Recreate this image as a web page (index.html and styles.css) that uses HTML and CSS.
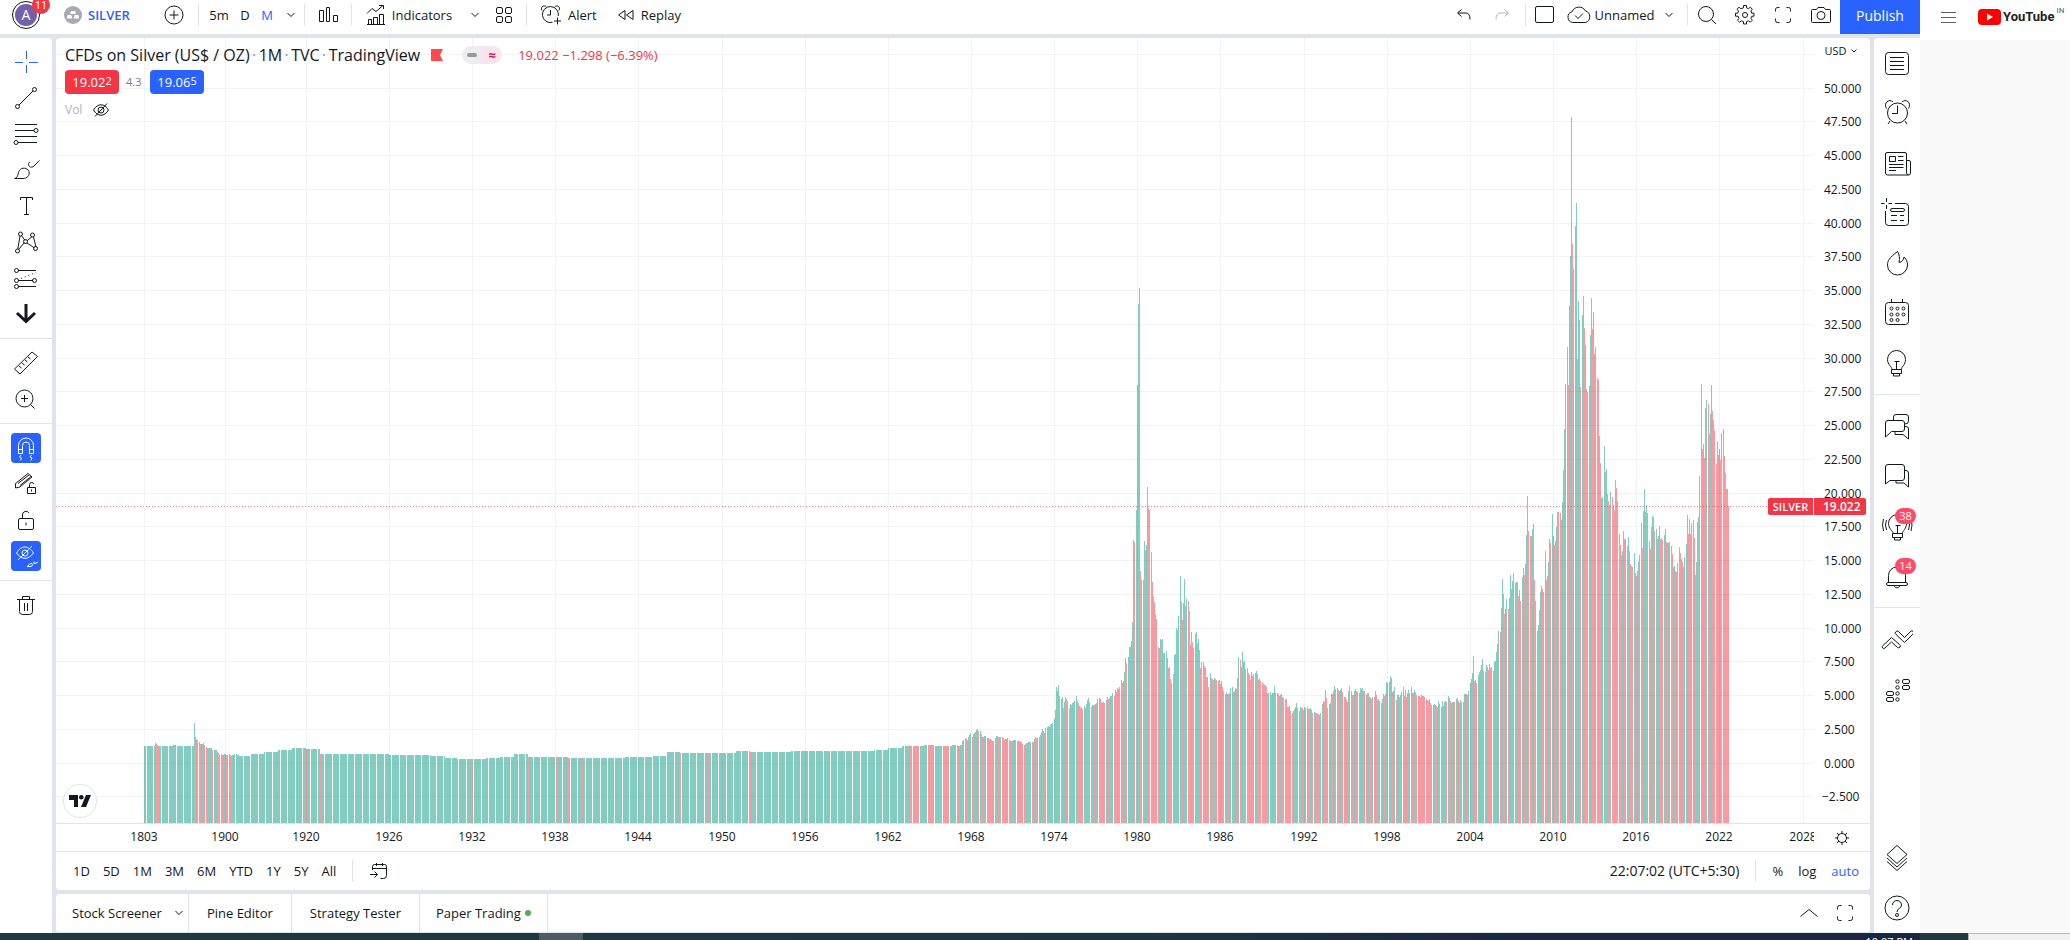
FILE: index.html
```html
<!DOCTYPE html>
<html lang="en">
<head>
<meta charset="utf-8">
<title>SILVER 19.022 − TradingView</title>
<link rel="stylesheet" href="styles.css">
</head>
<body>
<div class="desktop">
<div class="app">
  <header class="topbar">
    <button class="avatar" aria-label="Profile"><span class="avatar-ring"><span class="avatar-face">A</span></span><span class="avatar-badge">11</span></button>
    <button class="symbol"><svg width="18" height="18" viewBox="0 0 18 18"><circle cx="9" cy="9" r="9" fill="#a9a9b2"/><path d="M7 5h4l1 3H6zM3.600 9h3.800l1 3.500H2.800zM10.600 9h3.800l.8 3.500H9.600z" fill="#fff"/></svg><b>SILVER</b></button>
    <button class="tool w32" aria-label="Compare"><svg class="ic" width="28" height="28" viewBox="0 0 28 28"><circle cx="14" cy="14" r="9"/><path d="M14 9.500v9M9.500 14h9"/></svg></button>
    <i class="sep"></i>
    <button class="tool w30">5m</button><button class="tool w22">D</button><button class="tool w22 active">M</button>
    <button class="tool w26" aria-label="Intervals"><svg class="ic" width="10" height="6" viewBox="0 0 10 6"><path d="M1.500 1L5 4.500 8.500 1"/></svg></button>
    <i class="sep"></i>
    <button class="tool w46" aria-label="Chart type"><svg class="ic" width="28" height="28" viewBox="0 0 28 28"><path d="M5.500 9.500h4v11h-4zM12.500 6.500h3v14h-3zM19.500 14.500h4v6h-4z"/></svg></button>
    <i class="sep"></i>
    <button class="tool indicators"><svg class="ic" width="20" height="22" viewBox="0 0 20 22"><path d="M2.500 20.500v-5h3v5M7.500 20.500v-7h4v7M13.500 20.500v-10h4v10M1 20.500h18M1 9.500l5-5 4 3 7-6M13 1.500h4.500V5"/></svg>Indicators</button>
    <button class="tool w26" aria-label="Favorite indicators"><svg class="ic" width="10" height="6" viewBox="0 0 10 6"><path d="M1.500 1L5 4.500 8.500 1"/></svg></button>
    <button class="tool w32 templates" aria-label="Templates"><svg class="ic" width="18" height="18" viewBox="0 0 18 18"><rect x="1.500" y="1.500" width="6" height="6" rx="1.500"/><rect x="10.500" y="1.500" width="6" height="6" rx="1.500"/><rect x="1.500" y="10.500" width="6" height="6" rx="1.500"/><rect x="10.500" y="10.500" width="6" height="6" rx="1.500"/></svg></button>
    <i class="sep"></i>
    <button class="tool labelled"><svg class="ic" width="22" height="22" viewBox="0 0 22 22"><path d="M12.500 18.300A8 8 0 1 1 18.300 12M10.500 6v5H7M2 6.500C0 3 4 .5 6.500 3M14.500 3C17 .5 21 3 19 6.500M17.500 13.500v7M14 17h7"/></svg>Alert</button>
    <button class="tool labelled"><svg class="ic" width="18" height="14" viewBox="0 0 18 14"><path d="M8 2.500v9L1.500 7zM16 2.500v9L9.500 7z"/></svg>Replay</button>
    <span class="grow"></span>
    <button class="tool w38" aria-label="Undo"><svg class="ic" width="16" height="14" viewBox="0 0 16 14"><path d="M5.500 1.500l-4 3.500 4 3.500M2 5h8q4 0 4 6.500"/></svg></button>
    <button class="tool w38 faded" aria-label="Redo"><svg class="ic" width="16" height="14" viewBox="0 0 16 14"><path d="M10.500 1.500l4 3.500-4 3.500M14 5H6Q2 5 2 11.500"/></svg></button>
    <i class="sep"></i>
    <button class="tool w38" aria-label="Layout"><svg class="ic" width="20" height="20" viewBox="0 0 20 20"><rect x=".5" y="1.500" width="18" height="16" rx="1.500"/></svg></button>
    <button class="tool named"><svg class="ic" width="26" height="20" viewBox="0 0 26 20"><path d="M6.500 17.500A5.500 5.500 0 0 1 6 6.800 7.500 7.500 0 0 1 19.500 6a6 6 0 0 1 0 11.500zM9 10.500l3 3 5-5"/></svg>Unnamed</button>
    <button class="tool w26 manage" aria-label="Manage layouts"><svg class="ic" width="10" height="6" viewBox="0 0 10 6"><path d="M1.500 1L5 4.500 8.500 1"/></svg></button>
    <i class="sep"></i>
    <button class="tool w38" aria-label="Search"><svg class="ic" width="20" height="20" viewBox="0 0 20 20"><circle cx="9" cy="9" r="7.500"/><path d="M14.500 14.500l4.500 4.500"/></svg></button>
    <button class="tool w38" aria-label="Settings"><svg class="ic" width="22" height="22" viewBox="0 0 22 22"><circle cx="11" cy="11" r="2.500"/><path d="M9.500 1.500h3v2.300l2 .9 1.800-1.500 2 2-1.400 1.800.9 2.200h2.200v3h-2.200l-.9 2.200 1.400 1.800-2 2-1.800-1.400-2 .9v2.300h-3v-2.300l-2.200-.9-1.700 1.400-2.100-2 1.500-1.800-.9-2.200H1.500v-3h2.100l.9-2.200L3 5.200l2.100-2 1.700 1.500 2.700-.9z"/></svg></button>
    <button class="tool w38" aria-label="Fullscreen"><svg class="ic" width="18" height="18" viewBox="0 0 18 18"><path d="M1.500 5.500v-2q0-2 2-2h2M12.500 1.500h2q2 0 2 2v2M16.500 12.500v2q0 2-2 2h-2M5.500 16.500h-2q-2 0-2-2v-2"/></svg></button>
    <button class="tool w38" aria-label="Snapshot"><svg class="ic" width="22" height="18" viewBox="0 0 22 18"><path d="M2.500 3.500h4l1.500-2h6l1.500 2h4q1 0 1 1v11q0 1-1 1h-17q-1 0-1-1v-11q0-1 1-1z"/><circle cx="11" cy="9.500" r="4"/></svg></button>
    <button class="publish">Publish</button>
  </header>

  <nav class="drawbar" aria-label="Drawing tools">
    <div class="group">
      <button class="draw blue" aria-label="Cross"><svg class="ic" width="28" height="28" viewBox="0 0 28 28"><path d="M14.500 3v8M14.500 17v8M3 14.500h8M17 14.500h9"/></svg></button>
      <button class="draw" aria-label="Trend line"><svg class="ic" width="28" height="28" viewBox="0 0 28 28"><circle cx="5.500" cy="22.500" r="2"/><circle cx="22.500" cy="5.500" r="2"/><path d="M7 21L21 7"/></svg></button>
      <button class="draw" aria-label="Fib retracement"><svg class="ic" width="28" height="28" viewBox="0 0 28 28"><path d="M3 4.500h22M3 10.500h19M3 16.500h22M6 22.500h19"/><circle cx="24" cy="10.500" r="2"/><circle cx="4" cy="22.500" r="2"/></svg></button>
      <button class="draw" aria-label="Brush"><svg class="ic" width="28" height="28" viewBox="0 0 28 28"><path d="M2.500 22.500c4-1 3-5 5-8 2-3.500 8-3 9.500 1 1 4-2 7-6 7zM17.500 6c-3 4 2 7 4.500 4l5.500-5.500"/></svg></button>
      <button class="draw" aria-label="Text"><svg class="ic" width="28" height="28" viewBox="0 0 28 28"><path d="M8.500 8V5.500h12V8M14.500 5.500v17M12 22.500h5"/></svg></button>
      <button class="draw" aria-label="Patterns"><svg class="ic" width="28" height="28" viewBox="0 0 28 28"><path d="M5.800 21L8 8M9.500 7.500l3.500 5M14.800 13l5.400-4.500M21.500 9L24 19M22.500 20l-7.500-5M12.500 14.500l-6 7"/><circle cx="8.500" cy="6" r="2"/><circle cx="20.500" cy="7" r="2"/><circle cx="13.500" cy="13.500" r="2"/><circle cx="5.500" cy="23" r="2"/><circle cx="23.500" cy="20.500" r="2"/></svg></button>
      <button class="draw" aria-label="Forecast"><svg class="ic" width="28" height="28" viewBox="0 0 28 28"><path d="M6 6.500h18M6 16.500h15M6 22.500h18"/><path d="M9 14.500L24 8.500" stroke-dasharray="1 3"/><circle cx="4.500" cy="6.500" r="2"/><circle cx="4.500" cy="16.500" r="2"/><circle cx="4.500" cy="22.500" r="2"/><circle cx="22.500" cy="16.500" r="2"/></svg></button>
      <button class="draw" aria-label="Arrow down"><svg class="ic thick" width="28" height="28" viewBox="0 0 28 28"><path d="M14 4v18M5 13l9 8.500 9-8.500"/></svg></button>
    </div>
    <div class="group">
      <button class="draw" aria-label="Measure"><svg class="ic" width="28" height="28" viewBox="0 0 28 28"><path d="M2.500 20L20 3l5.500 4.500L8 25zM7 17l2.500 2M10 14l2.500 2M13 11l2.500 2M16 8l2.500 2"/></svg></button>
      <button class="draw" aria-label="Zoom in"><svg class="ic" width="28" height="28" viewBox="0 0 28 28"><circle cx="12.500" cy="13.500" r="8.500"/><path d="M12.500 10v7M9 13.500h7M18.500 19.500l4 4"/></svg></button>
    </div>
    <div class="group">
      <button class="draw" aria-label="Magnet"><span class="on"><svg class="ic" width="28" height="28" viewBox="0 0 28 28"><path d="M6.500 19.500v-8a7.500 7.500 0 0 1 15 0v8h-4v-8a3.500 3.500 0 0 0-7 0v8zM6.500 15.500h4M17.500 15.500h4M9 21l-1.500 2 2 1-1 2.500M19.500 21l-1.500 2 2 1-1 2.500"/></svg></span></button>
      <button class="draw" aria-label="Stay in drawing mode"><svg class="ic" width="28" height="28" viewBox="0 0 28 28"><path d="M3.500 13.500L16 3.500l4 3.500-12 10-4.500 1zM6 13.500l11-8.500M8 15.500l11-9M15.500 17.500h8v6h-8zM17.500 17.500v-3q0-2 2-2t2.500 1.500M19.500 19.500v2"/></svg></button>
      <button class="draw" aria-label="Lock drawings"><svg class="ic" width="28" height="28" viewBox="0 0 28 28"><rect x="6.500" y="12.500" width="15" height="11" rx="1.500"/><path d="M10.500 12.500V9a3.500 3.500 0 0 1 6.500-2M14 16.500v3" /></svg></button>
      <button class="draw" aria-label="Hide drawings"><span class="on"><svg class="ic" width="28" height="28" viewBox="0 0 28 28"><path d="M4.500 11c5-8 12-8 17 0-5 7-12 7-17 0zM6 18L20 4M15 24.500c2 0 1.500-3 4-3s2 3-1 3zM22 19.500q-1 3 1 2l3-1.500"/><circle cx="13" cy="11" r="3"/></svg></span></button>
    </div>
    <div class="group last">
      <button class="draw" aria-label="Remove"><svg class="ic" width="28" height="28" viewBox="0 0 28 28"><path d="M5 8.500h18M7.500 8.500v12q0 3 3 3h7q3 0 3-3v-12M10.500 8.500v-3h7v3M12.500 12v8M15.500 12v8"/></svg></button>
    </div>
  </nav>

  <main class="center">
    <section class="chart-card">
      <div class="chart" id="chart">
        <svg id="plot" role="img" aria-label="Silver monthly close"></svg>
        <div class="legend">
          <div class="legend-row title">CFDs on Silver (US$ / OZ)<i>·</i>1M<i>·</i>TVC<i>·</i>TradingView
            <svg class="flag" width="12" height="12" viewBox="0 0 12 12"><path d="M0 0h12L9 6l3 6H0z" fill="#ff4b4f"/></svg>
            <span class="pill"><span class="pill-dash"></span><span class="pill-wave">≈</span></span>
            <span class="change">19.022 −1.298 (−6.39%)</span></div>
          <div class="legend-row quotes"><button class="quote sell">19.02<span>2</span></button><span class="spread">4.3</span><button class="quote buy">19.06<span>5</span></button></div>
          <div class="legend-row vol">Vol<svg class="ic" width="18" height="16" viewBox="0 0 18 16"><path d="M1.500 8c4-7 11-7 15 0-4 7-11 7-15 0zM3 14.500L15 1.500"/><circle cx="9" cy="8" r="3"/></svg></div>
        </div>
        <button class="currency">USD<svg class="ic" width="8" height="6" viewBox="0 0 8 6"><path d="M1.500 1.500L4 4l2.500-2.500"/></svg></button>
        <div class="last-price"><span>SILVER</span><span>19.022</span></div>
        <div class="tv-logo"><svg width="22" height="12" viewBox="0 0 22 12" fill="#131722"><path d="M0 0h9v12H5V5H0zM17 0h5l-5 12h-5z"/><circle cx="12.300" cy="2.300" r="2.300"/></svg></div>
        <button class="axis-gear" aria-label="Axis settings"><svg class="ic" width="16" height="16" viewBox="0 0 16 16"><circle cx="8" cy="8" r="4.500"/><path d="M8 1v2.500M8 12.500V15M1 8h2.500M12.500 8H15M3 3l2 2M11 11l2 2M13 3l-2 2M5 11l-2 2"/></svg></button>
      </div>
      <div class="ranges">
        <button>1D</button><button>5D</button><button>1M</button><button>3M</button><button>6M</button><button>YTD</button><button>1Y</button><button>5Y</button><button>All</button>
        <i class="sep"></i>
        <button class="goto" aria-label="Go to date"><svg class="ic" width="20" height="18" viewBox="0 0 20 18"><path d="M3.500 8V4.500q0-2 2-2h10q2 0 2 2v9q0 3-3 3h-3M3.500 6.500h14M7.500 1v3M13.500 1v3M1 12.500h7M5.500 9.500l3 3-3 3"/></svg></button>
        <span class="grow"></span>
        <button class="clock">22:07:02 (UTC+5:30)</button>
        <i class="sep"></i>
        <button class="pct">%</button><button class="log">log</button><button class="auto">auto</button>
      </div>
    </section>
    <section class="tabs">
      <button>Stock Screener<svg class="ic" width="10" height="6" viewBox="0 0 10 6"><path d="M1.500 1L5 4.500 8.500 1"/></svg></button><button>Pine Editor</button><button>Strategy Tester</button><button class="paper">Paper Trading<span class="dot"></span></button>
      <span class="grow"></span>
      <button class="plain" aria-label="Open panel"><svg class="ic" width="20" height="10" viewBox="0 0 20 10"><path d="M1.500 8.500L10 1.500l8.500 7"/></svg></button>
      <button class="plain" aria-label="Maximize panel"><svg class="ic" width="18" height="18" viewBox="0 0 18 18"><path d="M1.500 5.500v-2q0-2 2-2h2M12.500 1.500h2q2 0 2 2v2M16.500 12.500v2q0 2-2 2h-2M5.500 16.500h-2q-2 0-2-2v-2"/></svg></button>
    </section>
  </main>

  <aside class="widgets">
    <div class="wgroup">
      <button aria-label="Watchlist"><svg class="ic" width="32" height="32" viewBox="0 0 32 32"><rect x="4.500" y="5.500" width="23" height="22" rx="3"/><path d="M9 10.500h14M9 14.500h14M9 18.500h14M9 22.500h14"/></svg></button>
      <button aria-label="Alerts"><svg class="ic" width="32" height="32" viewBox="0 0 32 32"><circle cx="16.500" cy="16" r="10"/><path d="M16.500 8.500v8H11M5.500 11.500C2 6 8 1 12 5M21 5c4-4 10 1 6.500 6.500M9 24l-2 3M24 24l2 3"/></svg></button>
      <button aria-label="News"><svg class="ic" width="32" height="32" viewBox="0 0 32 32"><path d="M25.500 26V7q0-1.500-1.500-1.500H6Q4.500 5.500 4.500 7v19q0 2 2 2h21q2 0 2-2V15q0-1.500-1.500-1.500h-2.500v12q0 2 2 2.500M8.500 9.500h6v5h-6zM17 9.500h5.500M17 13.500h5.500M8 17.500h14.500M8 20.500h14.500M8 23.500h7"/></svg></button>
      <button aria-label="Data window"><svg class="ic" width="32" height="32" viewBox="0 0 32 32"><path d="M14 6.500h10.500q3 0 3 3v16q0 3-3 3h-17q-3 0-3-3V14M5.500 1v4M5.500 8v4M0 6.500h3.500M7.500 6.500H11M10 18.500h6M19 18.500h4M10 23.500h6M19 23.500h4"/><rect x="9.500" y="11.500" width="14" height="3" rx="1.500"/></svg></button>
      <button aria-label="Hotlists"><svg class="ic" width="32" height="32" viewBox="0 0 32 32"><path d="M16.500 4.500C8 11 6.500 14 6.500 18a10 10 0 0 0 20 0c0-4-1.500-6-3.500-8-.5 3-2 5-5 5.500 1-4 .5-8-1.500-11z"/></svg></button>
      <button aria-label="Calendar"><svg class="ic" width="32" height="32" viewBox="0 0 32 32"><rect x="4.500" y="5.500" width="23" height="22" rx="3"/><path d="M10.500 2v4M21.500 2v4"/><circle cx="10.500" cy="11.500" r="1.500"/><circle cx="16.500" cy="11.500" r="1.500"/><circle cx="22.500" cy="11.500" r="1.500"/><circle cx="10.500" cy="17.500" r="1.500"/><circle cx="16.500" cy="17.500" r="1.500"/><circle cx="22.500" cy="17.500" r="1.500"/><circle cx="10.500" cy="23" r="1.500"/><circle cx="16.500" cy="23" r="1.500"/></svg></button>
      <button aria-label="Ideas"><svg class="ic" width="32" height="32" viewBox="0 0 32 32"><path d="M11 22.500c0-3-4.500-4.500-4.500-10a9 9 0 0 1 18 0c0 5.500-4 7-4 10zM10.500 22.500h10v4h-10zM12.500 26.500v2.500h6v-2.500M13.500 14.500h5M15.500 14.500v8"/></svg></button>
    </div>
    <div class="wgroup">
      <button aria-label="Public chats"><svg class="ic" width="32" height="32" viewBox="0 0 32 32"><path d="M4.500 26V12q0-2.500 2.500-2.500h14q2.500 0 2.500 2.500v6q0 2.500-2.500 2.500H10.500zM12.500 9V6q0-2.500 2.500-2.500h10q2.500 0 2.500 2.500v4q0 3-3.500 3M24 15.500h1q2.500 0 2.500 2.500v10l-5.500-4.500h-8V21"/></svg></button>
      <button aria-label="Private chats"><svg class="ic" width="32" height="32" viewBox="0 0 32 32"><path d="M4.500 23V6q0-2.500 2.500-2.500h14q2.500 0 2.500 2.500v11q0 2.500-2.500 2.500H9zM24 9.500h1q2.500 0 2.500 2.500v14l-4.500-4h-8V20"/></svg></button>
      <button aria-label="Streams"><svg class="ic" width="32" height="32" viewBox="0 0 32 32"><path d="M12 22.500c0-3-4.500-4.500-4.500-10a9 9 0 0 1 18 0c0 5.500-4 7-4 10zM11.500 22.500h10v4h-10zM13.500 26.500v2.500h6v-2.500M14.500 14.500h5M16.500 14.500v8M2.500 8q-2 6 0 12M5.500 9q-2 5 0 10M30 8q2 6 0 12M27.500 9q2 5 0 10"/></svg><span class="count">38</span></button>
      <button aria-label="Notifications"><svg class="ic" width="32" height="32" viewBox="0 0 32 32"><path d="M7.500 21.500v-7a8.500 8.500 0 0 1 17 0v7M13 24.500c1 3 5 3 6 0"/><rect x="5.500" y="21.500" width="21" height="3" rx="1.500"/></svg><span class="count">14</span></button>
    </div>
    <div class="wgroup">
      <button aria-label="Order panel"><svg class="ic" width="32" height="32" viewBox="0 0 32 32"><path d="M1.500 24q-1-1.500.5-2.500l8.500-8 8 7q1.500 1 .5 2.500t-2.500.5l-6-5.500-6.500 6q-1.500 1.500-2.500 0zM14.500 8q1.500-2 3-.5l6 6 6-6q1.500-1.500 2.700 0 1 1.500-.4 2.700L23.500 18.500l-8.500-8q-1.500-1-.5-2.500z"/></svg></button>
      <button aria-label="Depth of market"><svg class="ic" width="32" height="32" viewBox="0 0 32 32"><rect x="5.500" y="17.500" width="7" height="4" rx="1.500"/><rect x="5.500" y="23.500" width="7" height="4" rx="1.500"/><circle cx="16.500" cy="7.500" r="1.700"/><circle cx="16.500" cy="13.500" r="1.700"/><circle cx="16.500" cy="19.500" r="1.700"/><circle cx="16.500" cy="25.500" r="1.700"/><rect x="21.500" y="5.500" width="7" height="4" rx="1.500"/><rect x="21.500" y="11.500" width="7" height="4" rx="1.500"/></svg></button>
    </div>
    <span class="grow"></span>
    <button aria-label="Object tree"><svg class="ic" width="32" height="32" viewBox="0 0 32 32"><path d="M16 3.500l10 9-10 9-10-9zM6 16l10 9 10-9M6 19.500l10 9 10-9"/></svg></button>
    <button aria-label="Help"><svg class="ic" width="32" height="32" viewBox="0 0 32 32"><circle cx="16" cy="16" r="12"/><path d="M11.500 13c0-6 9-6 9 0 0 4-4.500 3-4.500 7"/><circle cx="16" cy="23" r="1.500"/></svg></button>
  </aside>
</div>

<aside class="video-page">
  <header><svg width="15" height="12" viewBox="0 0 15 12" stroke="#606060" fill="none"><path d="M0 1.500h15M0 6.500h15M0 11.500h15"/></svg>
    <a class="yt" href="#"><svg width="23" height="16" viewBox="0 0 23 16"><rect width="23" height="16" rx="4" fill="#f00"/><path d="M9 4.500l6 3.500-6 3.500z" fill="#fff"/></svg><b>YouTube</b><sup>IN</sup></a></header>
</aside>
</div>
<footer class="taskbar"><div class="tasks"><span class="task"></span><span class="tray">10:07 PM</span></div><span class="task-edge"></span><span class="scroll-edge"></span></footer>
<script src="chart.js"></script>
</body>
</html>
```

FILE: styles.css
```css
* { box-sizing: border-box; }
body {
  margin: 0;
  height: 100vh;
  display: flex;
  flex-direction: column;
  overflow: hidden;
  font: 13px/18px "Open Sans", "Noto Sans", sans-serif;
  color: #131722;
  background: #fff;
}
button {
  border: 0;
  padding: 0;
  margin: 0;
  background: none;
  font: inherit;
  color: inherit;
  display: flex;
  align-items: center;
  justify-content: center;
  white-space: nowrap;
  flex: none;
}
svg { flex: none; display: block; }
.ic { fill: none; stroke: currentColor; }
.thick { stroke-width: 3; }
.grow { flex: 1; }
.desktop { flex: 1; min-height: 0; display: flex; }
.app {
  flex: 1;
  min-width: 0;
  display: grid;
  grid-template: 34px minmax(0, 1fr) / 52px minmax(0, 1fr) 46px;
  gap: 4px;
  background: #e0e3eb;
}

/* top bar */
.topbar { grid-column: 1 / -1; display: flex; background: #fff; height: 34px; }
.topbar > button { height: 30px; margin-bottom: 4px; }
.topbar .sep { width: 1px; height: 22px; margin-top: 4px; background: #e0e3eb; flex: none; }
.avatar { width: 56px; position: relative; }
.topbar > .avatar { justify-content: flex-start; padding-left: 12px; }
.avatar-ring { width: 28px; height: 28px; border: 1px solid #131722; border-radius: 50%; padding: 2px; }
.avatar-face { display: block; height: 22px; border-radius: 50%; background: #7460a8; color: #fff; text-align: center; line-height: 22px; font-size: 14px; }
.avatar-badge { position: absolute; left: 32px; top: -4px; width: 18px; height: 18px; border-radius: 50%; background: #f23645; color: #fff; font-size: 11px; text-align: center; }
.symbol { width: 102px; gap: 6px; color: #2962ff; }
.topbar > .symbol { justify-content: flex-start; padding-left: 8px; }
.symbol b { font-weight: 600; }
.w22 { width: 22px; }
.w26 { width: 26px; }
.w30 { width: 30px; }
.w32 { width: 32px; margin-right: 8px; }
.w38 { width: 38px; }
.w46 { width: 46px; }
.sep + .w30 { margin-left: 5px; }
.active, .blue { color: #2962ff; }
.faded { color: #b2b5be; }
.indicators { width: 110px; gap: 6px; padding-left: 4px; }
.templates { margin: 0 6px 0 0; }
.labelled { gap: 6px; padding: 0 7px 0 13px; }
.named { width: 92px; gap: 3px; }
.manage { margin-right: 5px; }
.faded { margin-right: 4px; }
.publish { width: 80px; background: #2962ff; color: #fff; font-size: 14px; }
.topbar > .publish { height: 34px; margin: 0; padding-bottom: 2px; }

/* drawing tools */
.drawbar { background: #fff; border-radius: 0 4px 0 0; }
.group { padding: 6px 0; border-bottom: 1px solid #e0e3eb; }
.group.last { border: 0; }
.draw { width: 52px; height: 36px; }
.on { width: 30px; height: 30px; border-radius: 4px; background: #2962ff; color: #fff; display: flex; align-items: center; justify-content: center; }

/* chart */
.center { display: flex; flex-direction: column; gap: 4px; min-width: 0; }
.chart-card { flex: 1; min-height: 0; display: flex; flex-direction: column; background: #fff; border-radius: 4px; overflow: hidden; }
.chart { flex: 1; min-height: 0; position: relative; }
#plot { width: 100%; height: 100%; }
#plot text { font-size: 12px; fill: #131722; }
.legend { position: absolute; left: 9px; top: 6px; }
.legend-row { display: flex; align-items: center; white-space: nowrap; }
.title { font-size: 16px; height: 22px; }
.title i { width: 9px; text-align: center; color: #9598a1; font-style: normal; }
.flag { margin-left: 11px; }
.pill { display: flex; width: 40px; height: 18px; margin: 0 16px 0 19px; }
.pill-dash { width: 20px; background: #ededf0; border-radius: 9px 0 0 9px; display: flex; align-items: center; justify-content: center; }
.pill-dash::before { content: ""; width: 10px; height: 4px; border-radius: 2px; background: #9598a1; }
.pill-wave { width: 20px; background: #fce4ec; border-radius: 0 9px 9px 0; color: #c2185b; text-align: center; line-height: 18px; font-size: 13px; font-weight: 700; }
.change { font-size: 13px; color: #f23645; }
.quotes { gap: 7px; margin-top: 4px; }
.quote { width: 54px; height: 24px; border-radius: 4px; color: #fff; font-size: 13px; }
.quote span { font-size: 11px; line-height: 18px; padding-bottom: 3px; }
.sell { background: #f23645; }
.buy { background: #2962ff; }
.spread { width: 17px; font-size: 11px; color: #787b86; }
.vol { margin-top: 7px; gap: 10px; height: 18px; font-size: 12px; color: #b2b5be; }
.vol svg { color: #131722; }
.currency { position: absolute; right: 11px; top: 4px; font-size: 11px; gap: 3px; width: 36px; }
.last-price { position: absolute; right: 4px; bottom: 336px; display: flex; gap: 1px; font-size: 12px; line-height: 17px; font-weight: 600; color: #fff; }
.last-price span { background: #f23645; width: 52px; padding-left: 9px; border-radius: 0 2px 2px 0; }
.last-price span:first-child { width: 45px; padding: 0; text-align: center; font-size: 11px; border-radius: 2px 0 0 2px; }
.tv-logo { position: absolute; left: 7px; bottom: 33px; width: 34px; height: 34px; border-radius: 50%; background: #fff; border: 1px solid #e0e3eb; display: flex; align-items: center; justify-content: center; }
.axis-gear { position: absolute; right: 20px; bottom: 5px; }
.ranges { height: 39px; border-top: 1px solid #e0e3eb; display: flex; align-items: center; padding: 0 11px 0 17px; gap: 13px; }
.ranges .sep { width: 1px; height: 22px; background: #e0e3eb; margin: 0 3px; }
.clock { font-size: 14px; }
.pct, .log { margin-right: 2px; }
.auto { color: #2962ff; }

/* bottom tabs */
.tabs { height: 39px; background: #fff; border-radius: 4px; border-bottom: 1px solid #e0e3eb; display: flex; padding-right: 16px; }
.tabs button { padding: 0 18px; border-right: 1px solid #e0e3eb; }
.tabs button:first-child { gap: 12px; padding: 0 4px 0 16px; }
.tabs .paper { padding: 0 16px; }
.tabs .plain { border: 0; padding: 0; margin-left: 17px; }
.dot { width: 6px; height: 6px; border-radius: 50%; background: #4caf50; margin-left: 4px; }

/* widget bar */
.widgets { background: #fff; border-radius: 4px 0 0 0; display: flex; flex-direction: column; }
.wgroup { padding-bottom: 6px; border-bottom: 1px solid #e0e3eb; }
.wgroup + .wgroup { padding: 7px 0 5px; }
.wgroup + .wgroup + .wgroup { border: 0; }
.widgets button { width: 46px; height: 50px; position: relative; }
.count { position: absolute; left: 21px; top: 6px; width: 21px; height: 16px; border-radius: 8px; background: #ff4a68; color: #fff; font-size: 11px; line-height: 16px; text-align: center; }

/* neighbouring page */
.video-page { width: 150px; background: #f9f9f9; }
.video-page header { height: 40px; background: #fff; display: flex; align-items: center; gap: 22px; padding: 0 10px 6px 21px; }
.yt { display: flex; align-items: center; gap: 2px; color: #212121; text-decoration: none; font-family: Roboto, sans-serif; }
.yt b { font-size: 13px; }
.yt sup { font-size: 8px; line-height: 8px; color: #606060; padding-bottom: 12px; }

/* taskbar */
.taskbar { height: 7px; display: flex; background: #21383f; overflow: hidden; }
.tasks { flex: 1; display: flex; align-items: flex-start; background: linear-gradient(90deg, #21383f, #20343f 60%, #1a2740 80%); }
.task { width: 44px; height: 7px; margin-left: 539px; background: #4b5d63; }
.tray { margin: 2px 7px 0 auto; color: #fff; font-size: 11px; line-height: 14px; }
.task-edge { width: 48px; }
.scroll-edge { width: 102px; background: #f1f1f1; border: solid #b8b8b8; border-width: 1px 0 0 1px; }
```

FILE: chart.js
```js
// Each run is packed as x,y pairs: offset = x0 + x / kx, bar height = (base - y) / ky.
const runs = [
  { x0: 0, kx: 1, base: 0, ky: -1, pts: [
    0,77,8,77,9,80,10,77,11,80,13,78,14,77,28,77,29,78,31,78,32,77,49,77,50,100,51,86,52,84,53,83,55,81,56,79,58,79,59,80,60,78,61,76,
    63,75,67,75,68,73,72,73,73,71,75,68,76,69,78,68,81,69,82,68,85,69,87,67,91,69,94,68,95,67,106,67,107,69,119,69,120,71,133,71,134,73,
    147,73,148,75,161,75,162,74,175,74,176,69,244,69,245,68,286,68,287,67,300,67,301,65,312,65,313,64,341,64,342,65,355,65,356,66,369,66,
    370,69,383,69,384,66,423,66,424,65,480,65,481,66,508,66,509,67,521,67,522,71,535,71,536,70,591,70,592,72,605,72,606,71,646,71,647,72,
    729,72,730,73,743,73,744,75,757,75,758,77,764,77,765,78,766,77,779,77,780,78,790,78,791,77,807,77,808,78,813,78,814,77,817,78,818,82,
    819,83,821,85,823,83,824,86,826,90,828,86,829,89,831,91,833,94,835,90,836,92,838,86,841,87,843,85,846,84,848,82,849,82,852,87,854,86,
    858,86,860,83,863,85,866,82,871,83,877,81,878,79,880,78,884,81,889,81,891,86,894,84,896,88,898,94,900,90,901,95,904,97,905,96,907,99,
    909,100,910,104,911,113,912,136,913,132,914,138,915,127,917,124,918,126,919,115,921,126,923,122,924,119,925,115,926,119,927,118,
    929,121,930,122,932,127,933,122,935,117,937,115,938,114,940,117,941,115,943,123,944,125,945,121] },
  { x0: 936, kx: 3, base: 1548, ky: 2.8, pts: [
    31,1220,34,1224,37,1218,43,1218,46,1215,49,1212,52,1201,58,1198,61,1201,64,1210,67,1212,70,1210,73,1212,79,1204,82,1196,85,1201,88,1198,
    91,1193,94,1193,100,1176,103,1193,106,1176,109,1182,112,1170,115,1173,118,1168,124,1148,127,1156,130,1151,133,1126,136,1086,139,1100,
    145,1084,148,1056,151,1056,154,1039,157,986,160,756,163,762,169,672,172,322,175,95,178,50,181,843,184,868,190,868,193,759,196,784,
    199,770,202,608,205,666,208,672,214,790,217,874,220,913,223,930,226,963,229,977,235,1056,238,1058,241,1033,244,1036,247,1033,250,1072,
    256,1070,259,1067,262,1086,265,1114,268,1112,271,1145,274,1156,280,1131,283,1078,286,1075,289,1002,292,1008,295,969,301,857,304,930,
    307,980,310,932,313,865,316,941,319,921,325,927,328,955,331,1050,334,1014,337,1042,340,1058,346,1019,349,1014,352,1044,355,1033,
    358,1064,361,1114,364,1098,370,1098,373,1109,376,1114,379,1140,382,1140,385,1168,391,1128,394,1142,400,1148,403,1142,406,1145,412,1151,
    418,1148,421,1159,424,1151,427,1168,430,1179,436,1187,439,1182,442,1187,448,1184,451,1170,457,1168,460,1182,463,1179,466,1170,469,1173,
    472,1142,475,1084,481,1092,484,1112,487,1070,490,1098,493,1095,496,1117,502,1114,505,1128,508,1134,511,1148,514,1126,517,1137,520,1131,
    526,1128,529,1123,532,1131,535,1148,538,1142,541,1151,547,1154,550,1159,556,1162,559,1168,562,1184,568,1184,571,1182,574,1190,577,1184,
    580,1184,583,1165,586,1184,592,1184,595,1187,598,1193,604,1187,607,1196,613,1198,619,1201,622,1224,628,1221,631,1235,637,1240,640,1235,
    643,1229,646,1224,649,1212,652,1226,658,1235,661,1224,667,1226,670,1232,673,1224,676,1226,682,1224,685,1229,691,1226,694,1232,697,1240,
    703,1238,709,1240,715,1243,718,1246,724,1235,727,1215,730,1207,733,1210,736,1176,739,1198,742,1226,748,1215,751,1212,754,1187,757,1187,
    760,1179,763,1165,769,1179,772,1170,775,1176,778,1179,781,1176,784,1170,787,1182,793,1196,796,1196,799,1204,802,1210,805,1179,808,1165,
    814,1179,817,1190,820,1190,823,1179,826,1173,829,1179,832,1182,838,1184,841,1170,844,1173,847,1170,850,1179,853,1179,859,1190,862,1184,
    865,1184,868,1196,874,1201,880,1190,883,1196,886,1179,889,1190,892,1204,895,1201,898,1207,904,1212,907,1201,910,1187,913,1193,916,1187,
    919,1154,925,1159,928,1154,931,1137,934,1142,937,1182,940,1179,943,1168,949,1204,952,1190,955,1190,958,1196,961,1190,964,1182,970,1168,
    973,1193,976,1176,979,1196,982,1184,985,1176,988,1184,994,1168,997,1184,1000,1184,1003,1176,1006,1182,1009,1190,1015,1193,1018,1193,
    1021,1196,1024,1190,1030,1193,1036,1196,1039,1201,1045,1207,1048,1201,1051,1212,1054,1218,1060,1218,1063,1215,1066,1218,1072,1224,1075,1207] },
  { x0: 1296, kx: 3, base: 1553, ky: 2.148, pts: [
    1,1302,4,1304,7,1291,10,1302,13,1293,16,1291,19,1293,25,1280,28,1284,31,1291,34,1295,37,1293,40,1293,46,1295,49,1287,52,1284,55,1291,
    58,1295,61,1289,64,1293,70,1293,73,1276,79,1276,82,1278,85,1269,91,1252,94,1244,97,1231,100,1194,103,1248,106,1246,112,1257,115,1235,
    118,1229,121,1224,124,1214,127,1201,130,1226,136,1229,139,1214,142,1218,145,1224,148,1211,151,1220,157,1216,160,1226,163,1207,166,1205,
    169,1186,172,1168,175,1141,181,1143,184,1091,187,1029,190,1061,193,1104,196,1093,202,1050,205,1093,208,1070,211,1020,214,1050,217,1033,
    220,1016,226,1037,229,1035,232,1035,235,1065,238,1052,241,1076,247,1025,250,1005,253,1020,256,997,259,934,262,851,265,926,271,937,
    274,937,277,921,280,911,283,1031,286,1076,292,1141,295,1128,298,1095,301,1057,304,1044,307,1050,313,1065,316,969,319,1031,322,1022,
    325,992,328,943,331,952,337,889,340,937,343,956,346,947,349,917,352,885,358,887,361,887,364,902,367,863,370,795,373,707,376,610,
    382,531,385,612,388,442,391,335,394,37,397,309,403,419,406,271,409,221,412,556,415,432,418,473,421,616,427,462,430,421,433,490,436,526,
    439,621,442,627,448,614,451,505,454,425,457,492,460,455,463,546,469,513,472,597,475,601,478,722,481,780,484,855,487,853,493,743,
    496,799,499,793,502,846,505,861,508,870,514,812,517,853,520,870,523,881,526,816,529,833,532,861,538,932,541,956,544,977,547,969,
    550,926,553,943,559,943,562,958,565,939,568,969,571,997,574,1001,577,1003,583,973,586,1016,589,1022,592,1012,595,992,598,977,604,909,
    607,962,610,883,613,836,616,885,619,870,625,906,628,947,631,964,634,917,637,894,640,896,643,926,649,921,652,943,655,937,658,915,
    661,943,664,941,670,949,673,934,676,921,679,949,682,952,685,952,688,949,694,958,697,975,700,1003,703,1001,706,1012,709,1014,715,975,
    718,960,721,973,724,986,727,992,730,1003,733,982,739,954,742,891,745,932,748,900,751,932,754,909,760,902,763,941,766,1020,769,992,
    772,906,775,896,781,720,784,610,787,750,790,739,793,769,796,662,799,644,805,653,808,717,811,674,814,612,817,668,820,687,826,732,
    829,782,832,732,835,763,838,750,841,773,844,715,850,707,853,765,856,801,859,836,862,836,865,872] }
];

const points = [];
for (const r of runs) {
  for (let i = 0; i < r.pts.length; i += 2) {
    points.push([Math.floor(r.x0 + r.pts[i] / r.kx), (r.base - r.pts[i + 1]) / r.ky]);
  }
}

function heightAt(x) {
  let i = 0;
  while (i < points.length - 2 && points[i + 1][0] <= x) i++;
  const [x1, h1] = points[i];
  const [x2, h2] = points[i + 1];
  return Math.round(h1 + (h2 - h1) * Math.min(1, (x - x1) / (x2 - x1 || 1)));
}

const fallingMonths = new Set([13, 32, 162, 205, 259, 328, 412, 438, 564, 689]);
const years = [[1803, 0], [1900, 81], [1920, 162]];
for (let y = 1926; y <= 2028; y += 6) years.push([y, Math.round(245 + (y - 1926) * 13.858)]);

function draw() {
  const plot = document.getElementById('plot');
  const w = plot.clientWidth;
  const h = plot.clientHeight;
  const base = h - 28;
  const right = w - 56;
  const first = w - 1726;
  const yOf = p => Math.round(base - 60.5 - p * 13.495);
  let grid = '';
  let labels = '';
  for (let p = -2.5; p <= 52.5; p += 2.5) {
    const y = yOf(p);
    grid += `M0 ${y + 0.5}H${right}`;
    if (p <= 50) labels += `<text x="${p < 0 ? right + 8 : right + 10}" y="${y + 5}">${p.toFixed(3).replace('-', '−')}</text>`;
  }
  for (const [year, off] of years) {
    grid += `M${first + off + 0.5} 0V${base}`;
    labels += `<text x="${first + off}" y="${base + 18}" text-anchor="middle" clip-path="url(#timeAxis)">${year}</text>`;
  }
  let up = '';
  let down = '';
  let prev = 0;
  for (let i = 0; ; i++) {
    const off = Math.floor(0.77 + i * 1.1554);
    if (off > 1584) break;
    const v = heightAt(off);
    const idle = v === prev && (fallingMonths.has(off) || (off > 765 && (i * 7 + (i >> 2) * 5) % 11 < 6));
    const bar = `M${first + off} ${base}v${-v}h1v${v}z`;
    if (v < prev || idle) down += bar; else up += bar;
    prev = v;
  }
  const last = yOf(19.022) + 0.5;
  plot.innerHTML = `<clipPath id="timeAxis"><rect width="${right}" height="${h}"/></clipPath>
    <g shape-rendering="crispEdges"><path d="${up}" fill="#089981" fill-opacity=".5"/><path d="${down}" fill="#f23645" fill-opacity=".5"/>
    <path d="${grid}" stroke="#2a2e39" stroke-opacity=".06"/><path d="M0 ${base + 0.5}H${w}" stroke="#e0e3eb"/>
    <path d="M0 ${last}H${right - 46}" stroke="#f23645" stroke-opacity=".6" stroke-dasharray="1 2"/></g>${labels}`;
}
draw();
window.addEventListener('resize', draw);
```
